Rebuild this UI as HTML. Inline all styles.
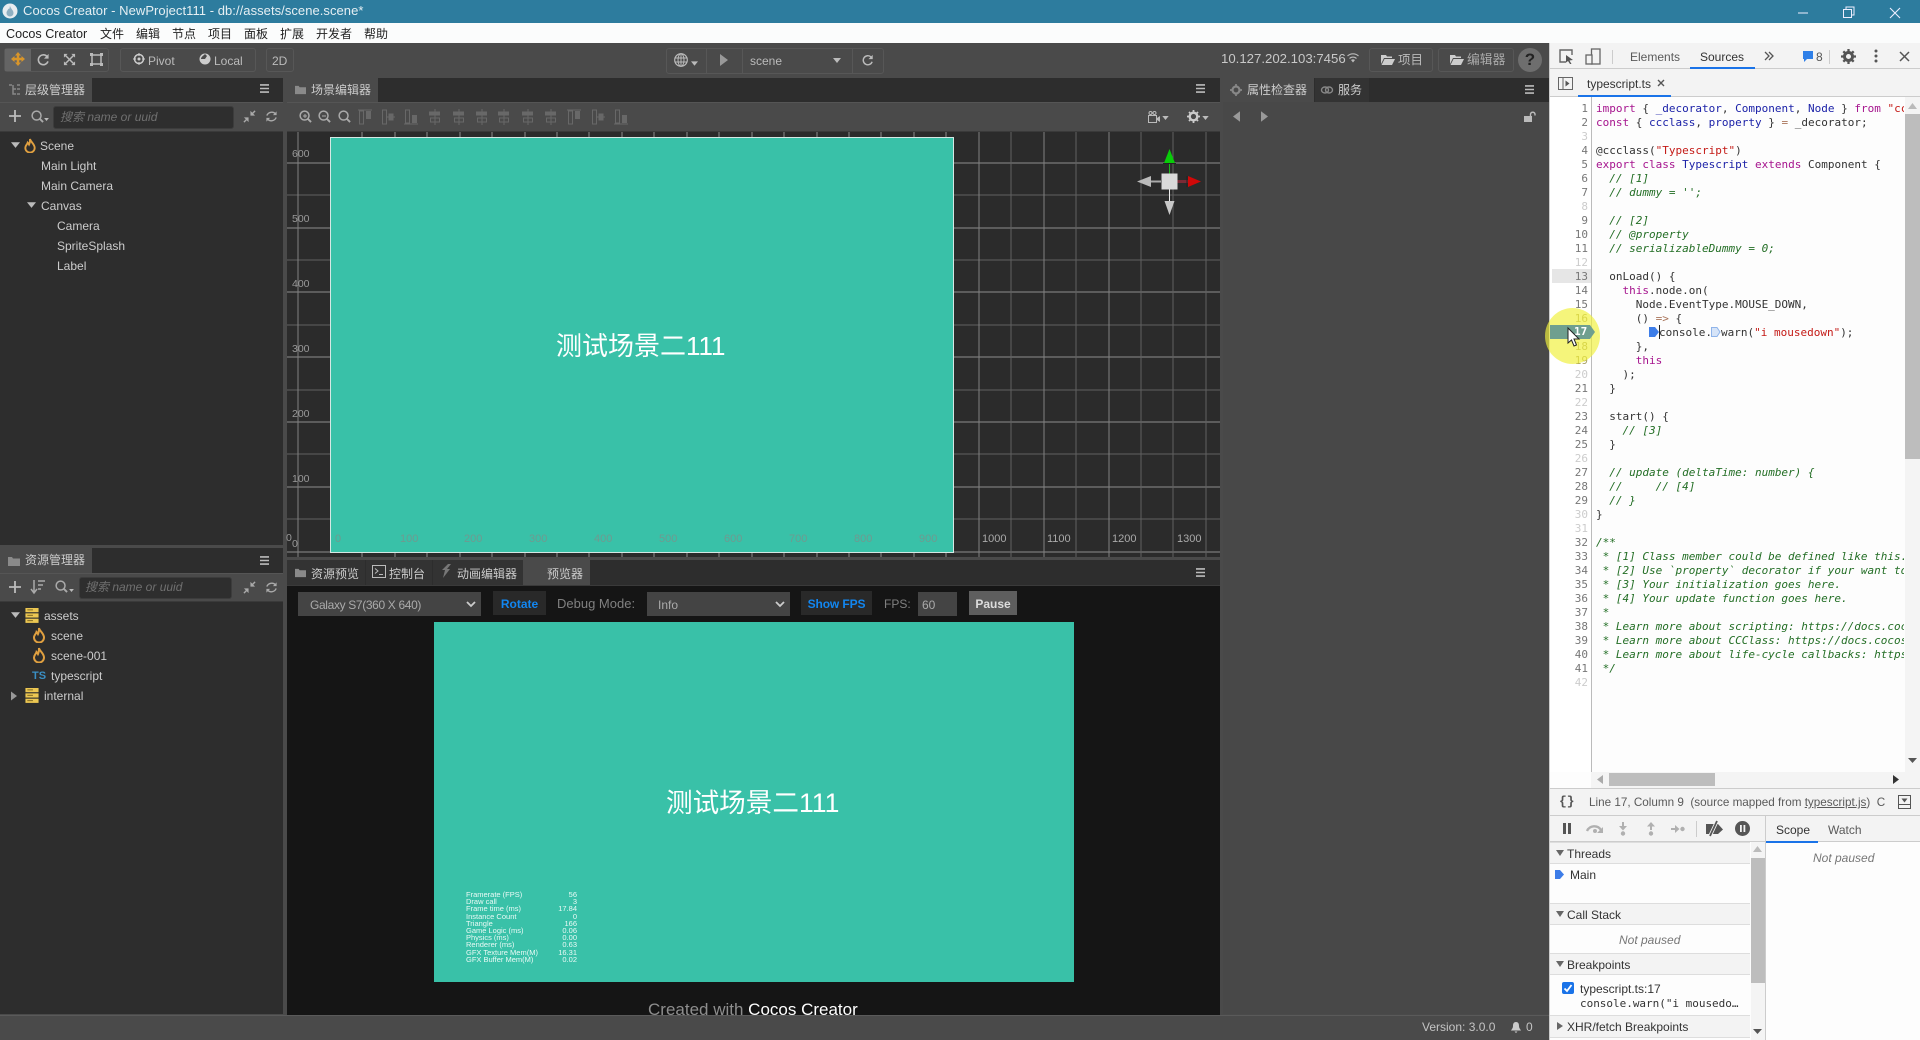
<!DOCTYPE html>
<html lang="zh"><head><meta charset="utf-8"><title>Cocos Creator</title>
<style>
html,body{margin:0;padding:0;background:#4a4a4a}
body{width:1920px;height:1040px;overflow:hidden;position:relative;font:12px/20px "Liberation Sans","Noto Sans CJK SC",sans-serif;color:#ccc}
.a{position:absolute}
.t{position:absolute;white-space:nowrap;line-height:20px}
svg{position:absolute;overflow:visible}
.tab{position:absolute;background:#4a4a4a}
.hd{position:absolute;background:#2d2d2d}
.bar{position:absolute;background:#4a4a4a;border-top:1px solid #555;border-bottom:1px solid #3a3a3a;box-sizing:border-box}
.pn{position:absolute;background:#2d2d2d}
.in{position:absolute;background:#2e2e2e;border-radius:3px;border:1px solid #3c3c3c;box-sizing:border-box}
.ph{position:absolute;white-space:nowrap;color:#707070;font-style:italic;line-height:20px}
.grp{position:absolute;border:1px solid #575757;border-radius:3px;box-sizing:border-box}
.sel{position:absolute;background:#444;height:24px;line-height:26px;color:#aaa;box-sizing:border-box}
.btn{position:absolute;height:24px;line-height:26px;text-align:center;font-weight:bold;box-sizing:border-box}
pre{margin:0;position:absolute;font:11px/14px "DejaVu Sans Mono","Liberation Mono",monospace;white-space:pre}
.k{color:#a6148e}.b{color:#1c22a8}.c{color:#236e25;font-style:italic}.s{color:#c41a16}.o{color:#a9745a}
.l{color:#ccc}.y{color:#a8a060}
.sh{position:absolute;left:1550px;width:200px;height:22px;background:#f3f3f3;border-top:1px solid #ddd;border-bottom:1px solid #ddd;box-sizing:border-box;color:#333;line-height:20px;padding:1px 0 0 17px}
.sh:before{content:"";position:absolute;left:6px;top:7px;border-left:4px solid transparent;border-right:4px solid transparent;border-top:6px solid #666}
.sh.cl:before{left:7px;top:6px;border-top:4px solid transparent;border-bottom:4px solid transparent;border-left:6px solid #666;border-right:0}
</style></head>
<body>
<svg width="0" height="0" style="position:absolute">
<defs>
<symbol id="fire" viewBox="0 0 12 16"><path d="M6 1C6.500 4 11 6.500 11 10.500A5 5 0 0 1 1 10.500C1 8 3 7 3.500 5 4.500 6 5 7 5 7 6 5 6 3 6 1Z" fill="none" stroke="#e0a040" stroke-width="2"/></symbol>
<symbol id="db" viewBox="0 0 14 16"><rect width="14" height="4.500" fill="#ecc752"/><rect y="5.700" width="14" height="4.500" fill="#ecc752"/><rect y="11.400" width="14" height="4.500" fill="#ecc752"/><rect x="2" y="1.500" width="6" height="1" fill="#7a6420"/><rect x="2" y="7.300" width="6" height="1" fill="#7a6420"/><rect x="2" y="13" width="6" height="1" fill="#7a6420"/></symbol>
<symbol id="menu" viewBox="0 0 10 10"><path d="M0 1H10M0 5H10M0 9H10" stroke="#bbb" stroke-width="1.800"/></symbol>
<symbol id="refresh" viewBox="0 0 14 14"><path d="M11.500 4.500A5.500 5.500 0 0 0 2 6M2.500 9.500A5.500 5.500 0 0 0 12 8" fill="none" stroke="#aaa" stroke-width="1.500"/><path d="M12.500 1.500V5.500H8.500ZM1.500 12.500V8.500H5.500Z" fill="#aaa"/></symbol>
<symbol id="rot" viewBox="0 0 14 14"><path d="M10.500 3.500A5.300 5.300 0 1 0 11.800 9" fill="none" stroke="#bbb" stroke-width="1.700"/><path d="M12.500 1V6H7.500Z" fill="#bbb"/></symbol>
<symbol id="coll" viewBox="0 0 14 14"><path d="M13 1L9 5M1 13L5 9" stroke="#aaa" stroke-width="1.500"/><path d="M8 1V6H13ZM6 13V8H1Z" fill="#aaa"/></symbol>
<symbol id="find" viewBox="0 0 14 14"><circle cx="6" cy="6" r="4.800" fill="none" stroke="#aaa" stroke-width="1.600"/><path d="M9.500 9.500L13 13" stroke="#aaa" stroke-width="2"/></symbol>
<symbol id="folder" viewBox="0 0 12 12"><path d="M0 2H4L5 3.500H12V11H0Z" fill="#8a8a8a"/></symbol>
<symbol id="alt" viewBox="0 0 14 16"><path d="M0 1H14" stroke="#686868"/><rect x="1.500" y="2" width="4" height="13" fill="none" stroke="#686868"/><rect x="8" y="2" width="5" height="8" fill="#686868"/></symbol>
<symbol id="alm" viewBox="0 0 14 16"><rect x="1.500" y="1" width="4" height="14" fill="none" stroke="#686868"/><path d="M5.500 8H14" stroke="#686868"/><rect x="7.500" y="4.500" width="5" height="7" fill="#686868"/></symbol>
<symbol id="alb" viewBox="0 0 14 16"><path d="M0 15H14" stroke="#686868"/><rect x="1.500" y="1" width="4" height="13" fill="none" stroke="#686868"/><rect x="8" y="6" width="5" height="8" fill="#686868"/></symbol>
<symbol id="alh" viewBox="0 0 14 16"><path d="M7 0V16" stroke="#686868"/><rect x="1" y="2.500" width="11" height="4" fill="#686868"/><rect x="2.500" y="9" width="9" height="4" fill="none" stroke="#686868"/></symbol>
<symbol id="caret" viewBox="0 0 8 5"><path d="M0 0H8L4 5Z" fill="#bbb"/></symbol>
<symbol id="tri" viewBox="0 0 8 12"><path d="M0 0L8 6L0 12Z" fill="#999"/></symbol>
</defs></svg>

<!-- title -->
<div class="a" style="left:0;top:0;width:1920px;height:23px;background:#2d7c9e"></div>
<svg style="left:2px;top:3px" width="16" height="16" viewBox="0 0 16 16"><circle cx="8" cy="8" r="7.500" fill="#e8edf0"/><path d="M8 2.500C8 5 11.500 7 11.500 10A3.500 3.500 0 0 1 4.500 10C4.500 8 6 7 6.500 5.500 7 6.500 7.500 6.500 8 2.500Z" fill="#8fb0c2"/></svg>
<div class="t" style="left:23px;top:1px;font-size:13px;color:#e6eff3;letter-spacing:.05px">Cocos Creator - NewProject111 - db://assets/scene.scene*</div>
<svg style="left:1798px;top:6px" width="110" height="14"><path d="M0 7H10" stroke="#eef" stroke-width="1"/><rect x="45.500" y="3.500" width="8" height="8" fill="none" stroke="#eef"/><path d="M48 3.500V1H56V9H53.500" fill="none" stroke="#eef"/><path d="M92 2L102 12M102 2L92 12" stroke="#eef" stroke-width="1.100"/></svg>

<!-- menu -->
<div class="a" style="left:0;top:23px;width:1920px;height:20px;background:#fbfcfc"></div>
<div class="t" style="left:6px;top:24px;font-size:12.600px;color:#222">Cocos Creator</div>
<div class="t" style="left:100px;top:24px;color:#222">文件</div>
<div class="t" style="left:136px;top:24px;color:#222">编辑</div>
<div class="t" style="left:172px;top:24px;color:#222">节点</div>
<div class="t" style="left:208px;top:24px;color:#222">项目</div>
<div class="t" style="left:244px;top:24px;color:#222">面板</div>
<div class="t" style="left:280px;top:24px;color:#222">扩展</div>
<div class="t" style="left:316px;top:24px;color:#222">开发者</div>
<div class="t" style="left:364px;top:24px;color:#222">帮助</div>

<!-- toolbar -->
<div class="a" style="left:0;top:43px;width:1550px;height:35px;background:#4a4a4a"></div>
<div class="grp" style="left:4px;top:48px;width:105px;height:24px"></div>
<div class="a" style="left:5px;top:49px;width:26px;height:22px;background:#646464"></div>
<svg style="left:11px;top:52px" width="14" height="14" viewBox="0 0 14 14"><path d="M7 0L10 3.500H8.200V5.800H10.500V4L14 7 10.500 10V8.200H8.200V10.500H10L7 14 4 10.500H5.800V8.200H3.500V10L0 7 3.500 4V5.800H5.800V3.500H4Z" fill="#d8952a"/></svg>
<svg style="left:37px;top:53px" width="13" height="13"><use href="#rot" width="13" height="13"/></svg>
<svg style="left:63px;top:53px" width="13" height="13" viewBox="0 0 14 14"><path d="M2 2L12 12M12 2L2 12" stroke="#bbb" stroke-width="1.600"/><path d="M1 1H5L1 5ZM13 1H9L13 5ZM1 13H5L1 9ZM13 13H9L13 9Z" fill="#bbb"/></svg>
<svg style="left:90px;top:53px" width="13" height="13" viewBox="0 0 13 13"><rect x="2" y="2" width="9" height="9" fill="none" stroke="#bbb" stroke-width="1.500"/><path d="M0 0H3V3H0ZM10 0H13V3H10ZM0 10H3V13H0ZM10 10H13V13H10Z" fill="#bbb"/></svg>
<div class="grp" style="left:120px;top:48px;width:136px;height:24px"></div>
<svg style="left:133px;top:53px" width="12" height="12" viewBox="0 0 12 12"><circle cx="6" cy="6" r="4.500" fill="none" stroke="#ccc" stroke-width="1.500"/><circle cx="6" cy="6" r="1.500" fill="#ccc"/><path d="M6 0V3M6 9V12M0 6H3M9 6H12" stroke="#ccc"/></svg>
<div class="t" style="left:148px;top:51px;color:#bbb">Pivot</div>
<svg style="left:199px;top:53px" width="12" height="12" viewBox="0 0 12 12"><circle cx="6" cy="6" r="5.500" fill="#ccc"/><path d="M6 1C4 3 2 4 2 6L6 6 8 3Z" fill="#4a4a4a"/></svg>
<div class="t" style="left:214px;top:51px;color:#bbb">Local</div>
<div class="grp" style="left:266px;top:48px;width:28px;height:24px"></div>
<div class="t" style="left:272px;top:51px;color:#bbb">2D</div>

<div class="grp" style="left:666px;top:48px;width:218px;height:26px"></div>
<div class="a" style="left:706px;top:48px;width:1px;height:26px;background:#575757"></div>
<div class="a" style="left:742px;top:48px;width:1px;height:26px;background:#575757"></div>
<div class="a" style="left:852px;top:48px;width:1px;height:26px;background:#575757"></div>
<svg style="left:674px;top:53px" width="14" height="14" viewBox="0 0 14 14"><circle cx="7" cy="7" r="6.300" fill="none" stroke="#bbb" stroke-width="1.200"/><ellipse cx="7" cy="7" rx="3" ry="6.300" fill="none" stroke="#bbb"/><path d="M1 5H13M1 9H13M7 .7V13.300" stroke="#bbb"/></svg>
<svg style="left:691px;top:61px" width="7" height="5"><use href="#caret" width="7" height="5"/></svg>
<svg style="left:720px;top:54px" width="8" height="12"><use href="#tri" width="8" height="12"/></svg>
<div class="t" style="left:750px;top:51px;color:#bbb">scene</div>
<svg style="left:833px;top:58px" width="8" height="5"><use href="#caret" width="8" height="5"/></svg>
<svg style="left:862px;top:54px" width="12" height="12"><use href="#rot" width="12" height="12"/></svg>

<div class="t" style="left:1221px;top:49px;font-size:13.200px;color:#c8c8c8;">10.127.202.103:7456</div>
<svg style="left:1347px;top:53px" width="12" height="10" viewBox="0 0 12 10"><path d="M.5 3A8 8 0 0 1 11.500 3M2.500 5.500A5 5 0 0 1 9.500 5.500" fill="none" stroke="#bbb" stroke-width="1.200"/><path d="M6 9.500L4 7A3 3 0 0 1 8 7Z" fill="#bbb"/></svg>
<div class="grp" style="left:1369px;top:48px;width:64px;height:24px"></div>
<svg style="left:1381px;top:54px" width="14" height="11" viewBox="0 0 14 11"><path d="M0 1H5L6 2.500H11V4H3L0 10ZM3.500 5H14L11 11H.5Z" fill="#ccc"/></svg>
<div class="t" style="left:1398px;top:50px;font-size:12.500px;color:#bbb">项目</div>
<div class="grp" style="left:1438px;top:48px;width:76px;height:24px"></div>
<svg style="left:1450px;top:54px" width="14" height="11" viewBox="0 0 14 11"><path d="M0 1H5L6 2.500H11V4H3L0 10ZM3.500 5H14L11 11H.5Z" fill="#ccc"/></svg>
<div class="t" style="left:1467px;top:50px;font-size:12.800px;color:#aaa">编辑器</div>
<div class="a" style="left:1518px;top:48px;width:24px;height:24px;border-radius:12px;background:#6e6e6e;color:#222;font:bold 17px/24px 'Liberation Sans';text-align:center">?</div>

<!-- hierarchy -->
<div class="hd" style="left:0;top:78px;width:283px;height:24px"></div>
<div class="tab" style="left:0;top:78px;width:92px;height:24px"></div>
<svg style="left:9px;top:84px" width="11" height="12" viewBox="0 0 11 12"><path d="M0 1H3M4 1V10H7M4 5H7M8 1H11M8 5H11M8 10H11" stroke="#888" stroke-width="1.500" fill="none"/></svg>
<div class="t" style="left:25px;top:80px;">层级管理器</div>
<svg style="left:260px;top:84px" width="9" height="9"><use href="#menu" width="9" height="9"/></svg>
<div class="bar" style="left:0;top:102px;width:283px;height:30px"></div>
<svg style="left:9px;top:110px" width="12" height="12"><path d="M6 0V12M0 6H12" stroke="#bbb" stroke-width="1.800"/></svg>
<svg style="left:31px;top:110px" width="13" height="13"><use href="#find" width="13" height="13"/></svg>
<svg style="left:44px;top:118px" width="5" height="3"><use href="#caret" width="5" height="3"/></svg>
<div class="in" style="left:53px;top:106px;width:181px;height:23px"></div>
<div class="ph" style="left:60px;top:107px">搜索 name or uuid</div>
<svg style="left:243px;top:110px" width="13" height="13"><use href="#coll" width="13" height="13"/></svg>
<svg style="left:265px;top:110px" width="13" height="13"><use href="#refresh" width="13" height="13"/></svg>
<div class="pn" style="left:0;top:132px;width:283px;height:413px"></div>
<svg style="left:11px;top:142px" width="9" height="6"><use href="#caret" width="9" height="6"/></svg>
<svg style="left:24px;top:138px" width="12" height="15"><use href="#fire" width="12" height="15"/></svg>
<div class="t" style="left:40px;top:136px">Scene</div>
<div class="t" style="left:41px;top:156px">Main Light</div>
<div class="t" style="left:41px;top:176px">Main Camera</div>
<svg style="left:27px;top:202px" width="9" height="6"><use href="#caret" width="9" height="6"/></svg>
<div class="t" style="left:41px;top:196px">Canvas</div>
<div class="t" style="left:57px;top:216px">Camera</div>
<div class="t" style="left:57px;top:236px">SpriteSplash</div>
<div class="t" style="left:57px;top:256px">Label</div>

<!-- assets -->
<div class="hd" style="left:0;top:548px;width:283px;height:25px"></div>
<div class="tab" style="left:0;top:548px;width:92px;height:25px"></div>
<svg style="left:8px;top:555px" width="12" height="12"><use href="#folder" width="12" height="12"/></svg>
<div class="t" style="left:25px;top:550px">资源管理器</div>
<svg style="left:260px;top:556px" width="9" height="9"><use href="#menu" width="9" height="9"/></svg>
<div class="bar" style="left:0;top:573px;width:283px;height:29px"></div>
<svg style="left:9px;top:581px" width="12" height="12"><path d="M6 0V12M0 6H12" stroke="#bbb" stroke-width="1.800"/></svg>
<svg style="left:31px;top:580px" width="16" height="14" viewBox="0 0 16 14"><path d="M3 0V12M0 9L3 13 6 9M7 1H14M7 5H12M7 9H10" stroke="#aaa" stroke-width="1.500" fill="none"/></svg>
<svg style="left:55px;top:580px" width="13" height="13"><use href="#find" width="13" height="13"/></svg>
<svg style="left:69px;top:589px" width="5" height="3"><use href="#caret" width="5" height="3"/></svg>
<div class="in" style="left:79px;top:577px;width:153px;height:22px"></div>
<div class="ph" style="left:85px;top:577px">搜索 name or uuid</div>
<svg style="left:243px;top:581px" width="13" height="13"><use href="#coll" width="13" height="13"/></svg>
<svg style="left:265px;top:581px" width="13" height="13"><use href="#refresh" width="13" height="13"/></svg>
<div class="pn" style="left:0;top:602px;width:283px;height:412px"></div>
<svg style="left:11px;top:612px" width="9" height="6"><use href="#caret" width="9" height="6"/></svg>
<svg style="left:25px;top:608px" width="14" height="15"><use href="#db" width="14" height="15"/></svg>
<div class="t" style="left:44px;top:606px">assets</div>
<svg style="left:33px;top:627px" width="12" height="16"><use href="#fire" width="12" height="16"/></svg>
<div class="t" style="left:51px;top:626px">scene</div>
<svg style="left:33px;top:647px" width="12" height="16"><use href="#fire" width="12" height="16"/></svg>
<div class="t" style="left:51px;top:646px">scene-001</div>
<div class="t" style="left:32px;top:666px;font-weight:bold;font-size:11px;color:#3a8fc4">TS</div>
<div class="t" style="left:51px;top:666px">typescript</div>
<svg style="left:11px;top:691px" width="6" height="10"><use href="#tri" width="6" height="10"/></svg>
<svg style="left:25px;top:688px" width="14" height="15"><use href="#db" width="14" height="15"/></svg>
<div class="t" style="left:44px;top:686px">internal</div>

<!-- scene panel -->
<div class="hd" style="left:287px;top:78px;width:933px;height:24px"></div>
<div class="tab" style="left:287px;top:78px;width:91px;height:24px"></div>
<svg style="left:295px;top:84px" width="11" height="11"><use href="#folder" width="11" height="11"/></svg>
<div class="t" style="left:311px;top:80px">场景编辑器</div>
<svg style="left:1196px;top:84px" width="9" height="9"><use href="#menu" width="9" height="9"/></svg>
<div class="bar" style="left:287px;top:102px;width:933px;height:30px"></div>
<svg style="left:299px;top:110px" width="13" height="13"><use href="#find" width="13" height="13"/><path d="M4 6H8M6 4V8" stroke="#aaa"/></svg>
<svg style="left:318px;top:110px" width="13" height="13"><use href="#find" width="13" height="13"/><path d="M4 6H8" stroke="#aaa"/></svg>
<svg style="left:338px;top:110px" width="13" height="13"><use href="#find" width="13" height="13"/></svg>
<svg style="left:358px;top:109px" width="14" height="16"><use href="#alt" width="14" height="16"/></svg>
<svg style="left:381px;top:109px" width="14" height="16"><use href="#alm" width="14" height="16"/></svg>
<svg style="left:404px;top:109px" width="14" height="16"><use href="#alb" width="14" height="16"/></svg>
<svg style="left:428px;top:109px" width="14" height="16"><use href="#alh" width="14" height="16"/></svg>
<svg style="left:452px;top:109px" width="14" height="16"><use href="#alh" width="14" height="16"/></svg>
<svg style="left:475px;top:109px" width="14" height="16"><use href="#alh" width="14" height="16"/></svg>
<svg style="left:497px;top:109px" width="14" height="16"><use href="#alh" width="14" height="16"/></svg>
<svg style="left:521px;top:109px" width="14" height="16"><use href="#alh" width="14" height="16"/></svg>
<svg style="left:544px;top:109px" width="14" height="16"><use href="#alh" width="14" height="16"/></svg>
<svg style="left:567px;top:109px" width="14" height="16"><use href="#alt" width="14" height="16"/></svg>
<svg style="left:591px;top:109px" width="14" height="16"><use href="#alm" width="14" height="16"/></svg>
<svg style="left:614px;top:109px" width="14" height="16"><use href="#alb" width="14" height="16"/></svg>
<svg style="left:1148px;top:111px" width="12" height="12" viewBox="0 0 12 12"><rect x=".5" y="4.500" width="8" height="7" fill="none" stroke="#bbb"/><circle cx="2.500" cy="2" r="1.500" fill="none" stroke="#bbb"/><circle cx="6.500" cy="2" r="1.500" fill="none" stroke="#bbb"/><path d="M9 7L12 5V11L9 9Z" fill="#bbb"/></svg>
<svg style="left:1162px;top:116px" width="7" height="4"><use href="#caret" width="7" height="4"/></svg>
<svg style="left:1187px;top:110px" width="13" height="13" viewBox="0 0 13 13"><circle cx="6.500" cy="6.500" r="3.800" fill="none" stroke="#ccc" stroke-width="2.400"/><path d="M6.500 0V3M6.500 10V13M0 6.500H3M10 6.500H13M2 2L4 4M9 9L11 11M11 2L9 4M4 9L2 11" stroke="#ccc" stroke-width="1.800"/></svg>
<svg style="left:1202px;top:116px" width="7" height="4"><use href="#caret" width="7" height="4"/></svg>

<div class="a" style="left:287px;top:132px;width:933px;height:425px;background:#2b2b2b"></div>
<svg style="left:287px;top:132px" width="933" height="425" viewBox="287 132 933 425" shape-rendering="crispEdges">
<path d="M287 163H1220M287 228H1220M287 292H1220M287 357H1220M287 422H1220M287 487H1220M287 552H1220" stroke="#8c8c8c"/>
<path d="M287 195H1220M287 260H1220M287 325H1220M287 390H1220M287 454H1220M287 519H1220" stroke="#626262"/>
<path d="M979 132V557M1044 132V557M1109 132V557M298 132V557" stroke="#808080"/>
<path d="M1011 132V557M1076 132V557M1141 132V557M1173 132V557M1206 132V557" stroke="#606060"/>
<path d="M362 132V137M395 132V137M427 132V137M460 132V137M492 132V137M525 132V137M557 132V137M589 132V137M622 132V137M654 132V137M687 132V137M719 132V137M752 132V137M784 132V137M817 132V137M849 132V137M881 132V137M914 132V137M946 132V137M362 552V557M395 552V557M427 552V557M460 552V557M492 552V557M525 552V557M557 552V557M589 552V557M622 552V557M654 552V557M687 552V557M719 552V557M752 552V557M784 552V557M817 552V557M849 552V557M881 552V557M914 552V557M946 552V557" stroke="#8c8c8c"/>
</svg>
<div class="a" style="left:330px;top:137px;width:624px;height:416px;box-sizing:border-box;background:#39c1a8;border:1px solid #d5e8e4"></div>
<div class="t" style="left:292px;top:144px;color:#999;font-size:10.500px">600</div>
<div class="t" style="left:292px;top:209px;color:#999;font-size:10.500px">500</div>
<div class="t" style="left:292px;top:274px;color:#999;font-size:10.500px">400</div>
<div class="t" style="left:292px;top:339px;color:#999;font-size:10.500px">300</div>
<div class="t" style="left:292px;top:404px;color:#999;font-size:10.500px">200</div>
<div class="t" style="left:292px;top:469px;color:#999;font-size:10.500px">100</div>
<div class="t" style="left:292px;top:534px;color:#999;font-size:10.500px">0</div>
<div class="t" style="left:286px;top:528px;color:#999;font-size:10.500px">0</div>
<div class="t" style="left:335px;top:529px;color:#6f9a90;font-size:11px">0</div>
<div class="t" style="left:400px;top:529px;color:#6f9a90;font-size:11px">100</div>
<div class="t" style="left:464px;top:529px;color:#6f9a90;font-size:11px">200</div>
<div class="t" style="left:529px;top:529px;color:#6f9a90;font-size:11px">300</div>
<div class="t" style="left:594px;top:529px;color:#6f9a90;font-size:11px">400</div>
<div class="t" style="left:659px;top:529px;color:#6f9a90;font-size:11px">500</div>
<div class="t" style="left:724px;top:529px;color:#6f9a90;font-size:11px">600</div>
<div class="t" style="left:789px;top:529px;color:#6f9a90;font-size:11px">700</div>
<div class="t" style="left:854px;top:529px;color:#6f9a90;font-size:11px">800</div>
<div class="t" style="left:919px;top:529px;color:#6f9a90;font-size:11px">900</div>
<div class="t" style="left:982px;top:529px;color:#aaa;font-size:11px">1000</div>
<div class="t" style="left:1047px;top:529px;color:#aaa;font-size:11px">1100</div>
<div class="t" style="left:1112px;top:529px;color:#aaa;font-size:11px">1200</div>
<div class="t" style="left:1177px;top:529px;color:#aaa;font-size:11px">1300</div>
<div class="t" style="left:556px;top:326px;font-size:26px;line-height:40px;color:#fff">测试场景二111</div>
<!-- gizmo -->
<svg style="left:1130px;top:145px" width="80" height="75" viewBox="0 0 80 75">
<path d="M39.500 29V18" stroke="#1bb81b"/><path d="M39.500 4L45 18H34Z" fill="#09cc09"/><path d="M33 18.500H46" stroke="#222"/>
<path d="M47 36.500H58" stroke="#7a2b36" stroke-width="3"/><path d="M71 36.500L58 31V42Z" fill="#d00808"/><path d="M57 31V42" stroke="#222"/>
<path d="M31 36.500H20" stroke="#aaa" stroke-width="2"/><path d="M7 36.500L21 31V42Z" fill="#bbb"/>
<path d="M39.500 44V56" stroke="#eee"/><path d="M39.500 70L34.500 56H44.500Z" fill="#c8c8c8"/>
<rect x="31.500" y="28.500" width="16" height="16" fill="#d9d9d9"/></svg>

<!-- bottom panel -->
<div class="hd" style="left:287px;top:560px;width:933px;height:25px"></div>
<div class="a" style="left:287px;top:560px;width:78px;height:25px;background:#333"></div>
<div class="a" style="left:366px;top:560px;width:66px;height:25px;background:#333"></div>
<div class="a" style="left:433px;top:560px;width:90px;height:25px;background:#333"></div>
<div class="tab" style="left:523px;top:560px;width:67px;height:25px"></div>
<svg style="left:295px;top:567px" width="11" height="11"><use href="#folder" width="11" height="11"/></svg>
<div class="t" style="left:311px;top:564px">资源预览</div>
<svg style="left:372px;top:565px" width="14" height="13" viewBox="0 0 14 13"><rect x=".5" y=".5" width="13" height="12" fill="none" stroke="#bbb"/><path d="M3 3.500L6 6 3 8.500M7 9.500H11" fill="none" stroke="#bbb"/></svg>
<div class="t" style="left:389px;top:564px">控制台</div>
<svg style="left:440px;top:564px" width="12" height="14" viewBox="0 0 12 14"><path d="M8 0L2 6H5L3 14 10 5H7L11 0Z" fill="#777"/></svg>
<div class="t" style="left:457px;top:564px">动画编辑器</div>
<div class="t" style="left:547px;top:564px">预览器</div>
<svg style="left:1196px;top:568px" width="9" height="9"><use href="#menu" width="9" height="9"/></svg>
<div class="a" style="left:287px;top:585px;width:933px;height:430px;background:#151515;border-top:1px solid #3a3a3a;box-sizing:border-box"></div>
<div class="sel" style="left:298px;top:592px;width:183px;padding-left:12px;letter-spacing:-.35px">Galaxy S7(360 X 640)</div>
<svg style="left:466px;top:601px" width="10" height="7"><path d="M1 1L5 5 9 1" fill="none" stroke="#ccc" stroke-width="1.800"/></svg>
<div class="btn" style="left:493px;top:591px;width:53px;background:#292929;color:#1286f0">Rotate</div>
<div class="t" style="left:557px;top:594px;font-size:13px;color:#808080">Debug Mode:</div>
<div class="sel" style="left:647px;top:592px;width:143px;padding-left:11px">Info</div>
<svg style="left:775px;top:601px" width="10" height="7"><path d="M1 1L5 5 9 1" fill="none" stroke="#ccc" stroke-width="1.800"/></svg>
<div class="btn" style="left:801px;top:591px;width:71px;background:#292929;color:#1286f0;letter-spacing:-.1px">Show FPS</div>
<div class="t" style="left:884px;top:594px;color:#808080">FPS:</div>
<div class="sel" style="left:918px;top:592px;width:39px;padding-left:4px">60</div>
<div class="btn" style="left:969px;top:591px;width:48px;background:#5e5e5e;color:#ddd">Pause</div>
<div class="a" style="left:434px;top:622px;width:640px;height:360px;background:#39c1a8"></div>
<div class="t" style="left:666px;top:783px;font-size:26.600px;line-height:40px;color:#fff">测试场景二111</div>
<pre style="left:466px;top:891px;font:7.500px/7.200px 'Liberation Sans',sans-serif;color:#eafaf6">Framerate (FPS)
Draw call
Frame time (ms)
Instance Count
Triangle
Game Logic (ms)
Physics (ms)
Renderer (ms)
GFX Texture Mem(M)
GFX Buffer Mem(M)</pre>
<pre style="left:537px;width:40px;text-align:right;top:891px;font:7.500px/7.200px 'Liberation Sans',sans-serif;color:#eafaf6">56
3
17.84
0
166
0.06
0.00
0.63
16.31
0.02</pre>
<div class="a" style="left:287px;top:982px;width:933px;height:33px;overflow:hidden"><div class="t" style="left:361px;top:18px;font-size:17px;color:#8e8e8e">Created with <span style="color:#fff">Cocos Creator</span></div></div>

<!-- inspector -->
<div class="hd" style="left:1223px;top:78px;width:326px;height:24px"></div>
<div class="tab" style="left:1223px;top:78px;width:91px;height:24px"></div>
<svg style="left:1230px;top:84px" width="12" height="12" viewBox="0 0 13 13"><circle cx="6.500" cy="6.500" r="3.800" fill="none" stroke="#888" stroke-width="2.400"/><path d="M6.500 0V3M6.500 10V13M0 6.500H3M10 6.500H13" stroke="#888" stroke-width="1.800"/></svg>
<div class="t" style="left:1247px;top:80px">属性检查器</div>
<div class="a" style="left:1315px;top:78px;width:54px;height:24px;background:#333"></div>
<svg style="left:1321px;top:85px" width="12" height="10" viewBox="0 0 12 10"><ellipse cx="4" cy="5" rx="3.500" ry="3" fill="none" stroke="#888" stroke-width="1.400"/><ellipse cx="8" cy="5" rx="3.500" ry="3" fill="none" stroke="#888" stroke-width="1.400"/></svg>
<div class="t" style="left:1338px;top:80px;font-size:12px">服务</div>
<svg style="left:1525px;top:85px" width="9" height="9"><use href="#menu" width="9" height="9"/></svg>
<div class="a" style="left:1223px;top:102px;width:326px;height:912px;background:#484848"></div>
<svg style="left:1233px;top:111px;transform:scaleX(-1)" width="7" height="11"><use href="#tri" width="7" height="11"/></svg>
<svg style="left:1261px;top:111px" width="7" height="11"><use href="#tri" width="7" height="11"/></svg>
<svg style="left:1524px;top:111px" width="12" height="11" viewBox="0 0 12 11"><rect x="0" y="5" width="8" height="6" fill="#bbb"/><path d="M6.500 5V3A2.300 2.300 0 0 1 11 3V4.500" fill="none" stroke="#bbb" stroke-width="1.400"/></svg>

<!-- status -->
<div class="a" style="left:0;top:1015px;width:1550px;height:25px;background:#4a4a4a;border-top:1px solid #5a5a5a;box-sizing:border-box"></div>
<div class="t" style="left:1422px;top:1017px;color:#c4c4c4">Version: 3.0.0</div>
<svg style="left:1511px;top:1022px" width="10" height="11" viewBox="0 0 10 11"><path d="M5 0C7.500 0 8 2 8 4 8 6.500 10 8 10 8.500H0C0 8 2 6.500 2 4 2 2 2.500 0 5 0ZM3.500 9.500H6.500L5 11Z" fill="#ccc"/></svg>
<div class="t" style="left:1526px;top:1017px;color:#c4c4c4">0</div>

<!-- devtools -->
<div class="a" style="left:1549px;top:43px;width:371px;height:997px;background:#fdfdfd;border-left:1px solid #ccc;box-sizing:border-box"></div>
<div class="a" style="left:1550px;top:43px;width:370px;height:26px;background:#f3f3f3;border-bottom:1px solid #ccc;box-sizing:border-box"></div>
<svg style="left:1559px;top:49px" width="15" height="15" viewBox="0 0 15 15"><path d="M7 13H1V1H13V6" fill="none" stroke="#666" stroke-width="1.400"/><path d="M7 6L14 11 10.500 11.500 12.500 15 11 15 9 12 7 13.500Z" fill="#555"/></svg>
<svg style="left:1585px;top:48px" width="16" height="17" viewBox="0 0 16 17"><rect x="6.500" y="1" width="8.500" height="15" fill="none" stroke="#666" stroke-width="1.300"/><rect x="1" y="7" width="6" height="9" fill="#f3f3f3" stroke="#666" stroke-width="1.300"/></svg>
<div class="a" style="left:1612px;top:50px;width:1px;height:14px;background:#ccc"></div>
<div class="t" style="left:1630px;top:47px;color:#5a5a5a">Elements</div>
<div class="t" style="left:1700px;top:47px;color:#333">Sources</div>
<div class="a" style="left:1690px;top:67px;width:65px;height:2px;background:#1a73e8"></div>
<svg style="left:1764px;top:51px" width="10" height="10"><path d="M1 1L5 5 1 9M5 1L9 5 5 9" fill="none" stroke="#555" stroke-width="1.300"/></svg>
<svg style="left:1803px;top:51px" width="10" height="11" viewBox="0 0 10 11"><path d="M0 0H10V8H4L1 11V8H0Z" fill="#2f80e8"/></svg>
<div class="t" style="left:1816px;top:47px;color:#555">8</div>
<div class="a" style="left:1829px;top:50px;width:1px;height:14px;background:#ccc"></div>
<svg style="left:1841px;top:49px" width="15" height="15" viewBox="0 0 13 13"><circle cx="6.500" cy="6.500" r="3.500" fill="none" stroke="#555" stroke-width="2.600"/><path d="M6.500 0V3M6.500 10V13M0 6.500H3M10 6.500H13M2 2L4 4M9 9L11 11M11 2L9 4M4 9L2 11" stroke="#555" stroke-width="2"/></svg>
<svg style="left:1874px;top:49px" width="4" height="14"><circle cx="2" cy="2" r="1.500" fill="#555"/><circle cx="2" cy="7" r="1.500" fill="#555"/><circle cx="2" cy="12" r="1.500" fill="#555"/></svg>
<svg style="left:1899px;top:51px" width="11" height="11"><path d="M1 1L10 10M10 1L1 10" stroke="#555" stroke-width="1.500"/></svg>

<div class="a" style="left:1550px;top:69px;width:370px;height:28px;background:#f3f3f3;border-bottom:1px solid #ccc;box-sizing:border-box"></div>
<svg style="left:1558px;top:77px" width="15" height="13" viewBox="0 0 15 13"><rect x=".5" y=".5" width="14" height="12" fill="none" stroke="#666"/><path d="M5 .5V12.500" stroke="#666"/><path d="M7.500 3.500L11.500 6.500 7.500 9.500Z" fill="#555"/></svg>
<div class="t" style="left:1587px;top:74px;color:#333">typescript.ts</div>
<svg style="left:1657px;top:79px" width="8" height="8"><path d="M1 1L7 7M7 1L1 7" stroke="#555" stroke-width="1.400"/></svg>
<div class="a" style="left:1578px;top:95px;width:93px;height:2px;background:#1a73e8"></div>

<div class="a" style="left:1550px;top:97px;width:41px;height:675px;background:#fff;border-right:1px solid #bbb;box-sizing:content-box"></div>
<div class="a" style="left:1552px;top:269px;width:39px;height:14px;background:#e6e6e6"></div>
<pre style="left:1551px;top:102px;width:37px;text-align:right;color:#777">1
2
<span class="l">3</span>
4
5
6
7
<span class="l">8</span>
9
10
11
<span class="l">12</span>
13
14
15
<span class="y">16</span>
<span style="color:#fff;font-weight:bold">&nbsp;</span>
<span class="y">18</span>
<span class="y">19</span>
<span class="l">20</span>
21
<span class="l">22</span>
23
24
25
<span class="l">26</span>
27
28
29
<span class="l">30</span>
<span class="l">31</span>
32
33
34
35
36
37
38
39
40
41
<span class="l">42</span></pre>
<div class="a" style="left:1596px;top:97px;width:308px;height:640px;overflow:hidden">
<pre style="left:0;top:5px;color:#333"><span class="k">import</span> { <span class="b">_decorator</span>, <span class="b">Component</span>, <span class="b">Node</span> } <span class="k">from</span> <span class="s">"cc"</span>;
<span class="k">const</span> { <span class="b">ccclass</span>, <span class="b">property</span> } <span class="o">=</span> _decorator;

@ccclass(<span class="s">"Typescript"</span>)
<span class="k">export</span> <span class="k">class</span> <span class="b">Typescript</span> <span class="k">extends</span> Component {
  <span class="c">// [1]</span>
  <span class="c">// dummy = '';</span>

  <span class="c">// [2]</span>
  <span class="c">// @property</span>
  <span class="c">// serializableDummy = 0;</span>

  onLoad() {
    <span class="k">this</span>.node.on(
      Node.EventType.MOUSE_DOWN,
      () <span class="o">=&gt;</span> {
        <span style="display:inline-block;width:10px"></span>console.<span style="display:inline-block;width:9px"></span>warn(<span class="s">"i mousedown"</span>);
      },
      <span class="k">this</span>
    );
  }

  start() {
    <span class="c">// [3]</span>
  }

  <span class="c">// update (deltaTime: number) {</span>
  <span class="c">//     // [4]</span>
  <span class="c">// }</span>
}

<span class="c">/**
 * [1] Class member could be defined like this.
 * [2] Use `property` decorator if your want to control
 * [3] Your initialization goes here.
 * [4] Your update function goes here.
 *
 * Learn more about scripting: https://docs.cocos.com/creator
 * Learn more about CCClass: https://docs.cocos.com/creator
 * Learn more about life-cycle callbacks: https://docs.cocos
 */</span>
</pre></div>
<svg style="left:1649px;top:326px" width="72" height="12"><path d="M0 1H6L10 6 6 11H0Z" fill="#3d7de8"/><path d="M62.500 1.500H68L71 6 68 10.500H62.500Z" fill="#d6e4f8" stroke="#8fb4ea"/></svg>
<div class="a" style="left:1659px;top:325px;width:1px;height:14px;background:#222"></div>

<!-- v scrollbar -->
<div class="a" style="left:1905px;top:97px;width:15px;height:675px;background:#f4f4f4"></div>
<svg style="left:1908px;top:103px" width="9" height="6"><path d="M0 6L4.500 0 9 6Z" fill="#bbb"/></svg>
<div class="a" style="left:1905px;top:114px;width:15px;height:345px;background:#bdbdbd"></div>
<svg style="left:1908px;top:758px" width="9" height="5"><path d="M0 0H9L4.500 5Z" fill="#555"/></svg>

<!-- yellow cursor highlight -->
<div class="a" style="left:1545px;top:308px;width:55px;height:56px;border-radius:50%;background:rgba(240,240,60,.68)"></div>
<svg style="left:1550px;top:325px" width="46" height="14"><path d="M0 0H40L45 7 40 14H0Z" fill="#6f9f8f"/></svg>
<div class="t" style="left:1574px;top:322px;font:bold 11px/20px 'DejaVu Sans Mono',monospace;color:#fff">17</div>
<svg style="left:1567px;top:327px" width="13" height="20" viewBox="0 0 13 20"><path d="M1 1V16L4.500 13 7 19 9.500 18 7 12H12Z" fill="#fff" stroke="#222"/></svg>

<!-- h scrollbar -->
<div class="a" style="left:1591px;top:772px;width:329px;height:16px;background:#f4f4f4"></div>
<svg style="left:1597px;top:775px" width="6" height="9"><path d="M6 0L0 4.500 6 9Z" fill="#aaa"/></svg>
<div class="a" style="left:1609px;top:773px;width:106px;height:13px;background:#bdbdbd"></div>
<svg style="left:1893px;top:775px" width="6" height="9"><path d="M0 0L6 4.500 0 9Z" fill="#333"/></svg>

<!-- source status -->
<div class="a" style="left:1550px;top:788px;width:370px;height:28px;background:#f3f3f3;border-top:1px solid #ccc;border-bottom:1px solid #ccc;box-sizing:border-box"></div>
<div class="t" style="left:1559px;top:792px;font:bold 13px/20px 'Liberation Mono',monospace;color:#555">{}</div>
<div class="t" style="left:1589px;top:793px;color:#5a5a5a;font-size:11.700px">Line 17, Column 9&nbsp; (source mapped from <span style="text-decoration:underline">typescript.js</span>)&nbsp; C</div>
<svg style="left:1898px;top:795px" width="13" height="14"><rect x=".5" y=".5" width="12" height="13" fill="none" stroke="#555"/><path d="M.5 9.500H12.500" stroke="#555"/><path d="M3.500 3.500H9.500L6.500 7.500Z" fill="#555"/></svg>

<!-- debug toolbar -->
<div class="a" style="left:1550px;top:816px;width:215px;height:26px;background:#f3f3f3;border-bottom:1px solid #ccc;box-sizing:border-box"></div>
<svg style="left:1562px;top:823px" width="10" height="11"><path d="M1 0H4V11H1ZM6 0H9V11H6Z" fill="#555"/></svg>
<svg style="left:1586px;top:823px" width="18" height="11" viewBox="0 0 18 11"><path d="M1 8A8 8 0 0 1 15 7" fill="none" stroke="#b0b0b0" stroke-width="2.400"/><path d="M17 4V10H11ZM7 8A2 2 0 1 0 11 8 2 2 0 0 0 7 8Z" fill="#b0b0b0"/></svg>
<svg style="left:1618px;top:822px" width="10" height="14" viewBox="0 0 10 14"><path d="M5 0V6" stroke="#b0b0b0" stroke-width="2"/><path d="M1 4H9L5 8.500Z" fill="#b0b0b0"/><circle cx="5" cy="11.500" r="2.200" fill="#b0b0b0"/></svg>
<svg style="left:1646px;top:822px" width="10" height="14" viewBox="0 0 10 14"><path d="M5 3V8" stroke="#b0b0b0" stroke-width="2"/><path d="M1 4.500H9L5 0Z" fill="#b0b0b0"/><circle cx="5" cy="11.500" r="2.200" fill="#b0b0b0"/></svg>
<svg style="left:1671px;top:824px" width="14" height="10" viewBox="0 0 14 10"><path d="M0 5H5" stroke="#b0b0b0" stroke-width="2"/><path d="M4 1V9L8.500 5Z" fill="#b0b0b0"/><circle cx="11.500" cy="5" r="2.200" fill="#b0b0b0"/></svg>
<div class="a" style="left:1696px;top:821px;width:1px;height:16px;background:#ccc"></div>
<svg style="left:1705px;top:821px" width="19" height="15" viewBox="0 0 19 15"><path d="M1 3H13L18 8.500 13 13H1Z" fill="#555"/><path d="M12 0L5 15" stroke="#f3f3f3" stroke-width="3.500"/><path d="M12 0L5 15" stroke="#555" stroke-width="1.800"/></svg>
<svg style="left:1735px;top:821px" width="15" height="15"><circle cx="7.500" cy="7.500" r="7.500" fill="#555"/><path d="M5 4H6.800V11H5ZM8.500 4H10.300V11H8.500Z" fill="#f3f3f3"/></svg>

<div class="a" style="left:1765px;top:816px;width:155px;height:224px;background:#fdfdfd;border-left:1px solid #ccc;box-sizing:border-box"></div>
<div class="a" style="left:1766px;top:816px;width:154px;height:26px;background:#f3f3f3;border-bottom:1px solid #ccc;box-sizing:border-box"></div>
<div class="t" style="left:1776px;top:820px;color:#333">Scope</div>
<div class="t" style="left:1828px;top:820px;color:#5a5a5a">Watch</div>
<div class="a" style="left:1766px;top:841px;width:52px;height:2px;background:#1a73e8"></div>
<div class="t" style="left:1813px;top:848px;color:#777;font-style:italic">Not paused</div>

<!-- sidebar -->
<div class="sh" style="top:842px;height:22px">Threads</div>
<svg style="left:1555px;top:870px" width="9" height="9" viewBox="0 0 9 9"><path d="M0 0H5L9 4.500 5 9H0Z" fill="#3d7de8"/></svg>
<div class="t" style="left:1570px;top:865px;color:#333">Main</div>
<div class="sh" style="top:903px">Call Stack</div>
<div class="t" style="left:1619px;top:930px;color:#777;font-style:italic">Not paused</div>
<div class="sh" style="top:953px">Breakpoints</div>
<div class="a" style="left:1562px;top:982px;width:12px;height:12px;background:#1a73e8;border-radius:2px"></div>
<svg style="left:1562px;top:982px" width="12" height="12"><path d="M2.500 6.500L5 9 9.500 3" fill="none" stroke="#fff" stroke-width="1.800"/></svg>
<div class="t" style="left:1580px;top:979px;color:#333">typescript.ts:17</div>
<div class="t" style="left:1580px;top:994px;font:11px/20px 'DejaVu Sans Mono',monospace;color:#333;letter-spacing:-.02px">console.warn("i mousedo…</div>
<div class="sh cl" style="top:1015px;height:23px">XHR/fetch Breakpoints</div>
<div class="a" style="left:1751px;top:842px;width:14px;height:198px;background:#f4f4f4"></div>
<svg style="left:1753px;top:846px" width="9" height="6"><path d="M0 6L4.500 0 9 6Z" fill="#bbb"/></svg>
<div class="a" style="left:1751px;top:858px;width:14px;height:125px;background:#bdbdbd"></div>
<svg style="left:1753px;top:1029px" width="9" height="5"><path d="M0 0H9L4.500 5Z" fill="#555"/></svg>
</body></html>
